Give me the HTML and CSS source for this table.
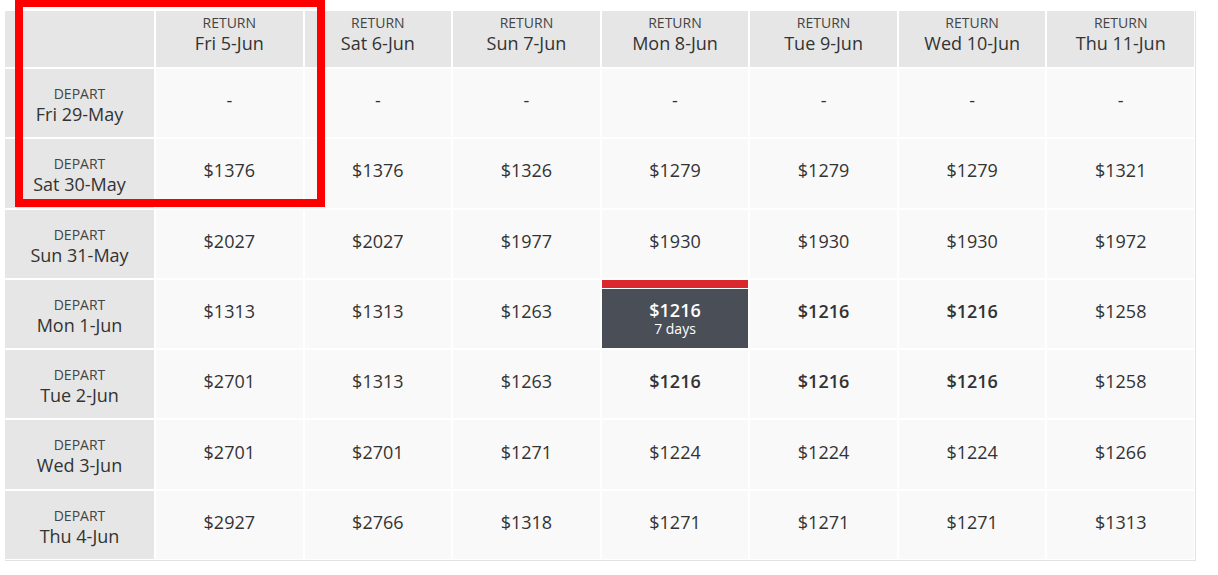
FILE: index.html
```html
<!DOCTYPE html>
<html>
<head>
<meta charset="utf-8">
<link rel="stylesheet" href="styles.css">
</head>
<body>
<div class="page">
  <div class="grid">
    <div class="hd corner"></div>
    <div class="hd"><span class="lbl">RETURN</span><span class="dt">Fri 5-Jun</span></div>
    <div class="hd"><span class="lbl">RETURN</span><span class="dt">Sat 6-Jun</span></div>
    <div class="hd"><span class="lbl">RETURN</span><span class="dt">Sun 7-Jun</span></div>
    <div class="hd"><span class="lbl">RETURN</span><span class="dt">Mon 8-Jun</span></div>
    <div class="hd"><span class="lbl">RETURN</span><span class="dt">Tue 9-Jun</span></div>
    <div class="hd"><span class="lbl">RETURN</span><span class="dt">Wed 10-Jun</span></div>
    <div class="hd"><span class="lbl">RETURN</span><span class="dt">Thu 11-Jun</span></div>

    <div class="dep"><span class="lbl">DEPART</span><span class="dt">Fri 29-May</span></div>
    <div class="c">-</div><div class="c">-</div><div class="c">-</div><div class="c">-</div><div class="c">-</div><div class="c">-</div><div class="c">-</div>

    <div class="dep"><span class="lbl">DEPART</span><span class="dt">Sat 30-May</span></div>
    <div class="c">$1376</div><div class="c">$1376</div><div class="c">$1326</div><div class="c">$1279</div><div class="c">$1279</div><div class="c">$1279</div><div class="c">$1321</div>

    <div class="dep"><span class="lbl">DEPART</span><span class="dt">Sun 31-May</span></div>
    <div class="c">$2027</div><div class="c">$2027</div><div class="c">$1977</div><div class="c">$1930</div><div class="c">$1930</div><div class="c">$1930</div><div class="c">$1972</div>

    <div class="dep"><span class="lbl">DEPART</span><span class="dt">Mon 1-Jun</span></div>
    <div class="c">$1313</div><div class="c">$1313</div><div class="c">$1263</div>
    <div class="best"><div class="bar"></div><div class="best-body"><span class="bp">$1216</span><span class="days">7 days</span></div></div>
    <div class="c b">$1216</div><div class="c b">$1216</div><div class="c">$1258</div>

    <div class="dep"><span class="lbl">DEPART</span><span class="dt">Tue 2-Jun</span></div>
    <div class="c">$2701</div><div class="c">$1313</div><div class="c">$1263</div><div class="c b">$1216</div><div class="c b">$1216</div><div class="c b">$1216</div><div class="c">$1258</div>

    <div class="dep"><span class="lbl">DEPART</span><span class="dt">Wed 3-Jun</span></div>
    <div class="c">$2701</div><div class="c">$2701</div><div class="c">$1271</div><div class="c">$1224</div><div class="c">$1224</div><div class="c">$1224</div><div class="c">$1266</div>

    <div class="dep"><span class="lbl">DEPART</span><span class="dt">Thu 4-Jun</span></div>
    <div class="c">$2927</div><div class="c">$2766</div><div class="c">$1318</div><div class="c">$1271</div><div class="c">$1271</div><div class="c">$1271</div><div class="c">$1313</div>
  </div>
  <div class="mark"></div>
</div>
</body>
</html>
```
FILE: styles.css
```css
* { box-sizing: border-box; }
html, body { margin: 0; padding: 0; background: #fff; }
body {
  font-family: "Open Sans", "Liberation Sans", sans-serif;
  color: #333;
}
.page {
  position: relative;
  width: 1218px;
  height: 575px;
  padding: 11px 0 0 5px;
}
.grid {
  display: grid;
  width: 1191px;
  grid-template-columns: 149px repeat(7, 1fr);
  grid-template-rows: 56px;
  grid-auto-rows: 68.3px;
  gap: 2px;
  padding: 0 1px 1px 0;
  border-right: 1px solid #e2e2e2;
  border-bottom: 1px solid #e2e2e2;
  background: #fff;
}
.hd, .dep {
  background: #e6e6e6;
  display: flex;
  flex-direction: column;
  align-items: center;
  text-align: center;
}
.hd { padding-top: 3px; }
.dep { padding-top: 16px; }
.lbl {
  font-size: 14px;
  line-height: 18px;
  color: #444;
}
.dt {
  font-size: 18px;
  line-height: 23px;
  color: #333;
}
.c {
  background: #f9f9f9;
  display: flex;
  align-items: center;
  justify-content: center;
  font-size: 18px;
  line-height: 24px;
  padding-bottom: 6px;
  color: #333;
}
.c.b { font-weight: 600; }
.best {
  display: flex;
  flex-direction: column;
  background: #fff;
}
.bar {
  height: 8px;
  background: #d9292f;
  margin-bottom: 1px;
}
.best-body {
  flex: 1;
  background: #4a4e56;
  color: #fff;
  display: flex;
  flex-direction: column;
  align-items: center;
  justify-content: center;
  padding-bottom: 1px;
}
.bp {
  font-size: 18px;
  line-height: 22px;
  font-weight: 600;
}
.days {
  font-size: 14px;
  line-height: 16px;
}
.mark {
  position: absolute;
  left: 15px;
  top: -1px;
  width: 310px;
  height: 208px;
  border: 8px solid #ff0000;
}
```
